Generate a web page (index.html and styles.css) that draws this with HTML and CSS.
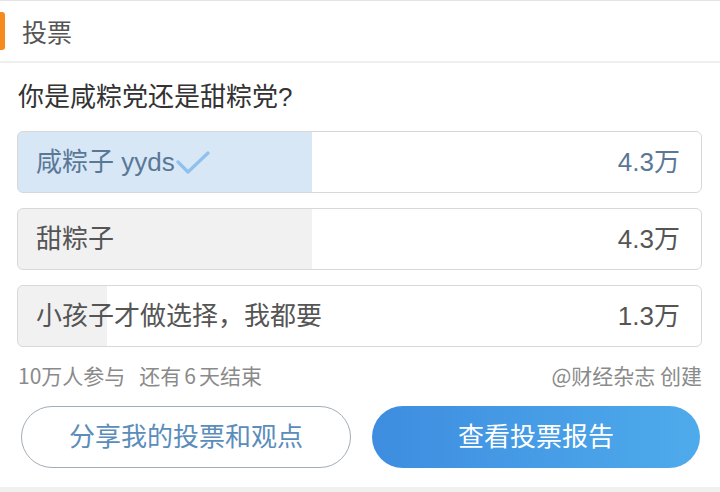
FILE: index.html
```html
<!DOCTYPE html>
<html lang="zh-CN">
<head>
<meta charset="utf-8">
<title>投票</title>
<link rel="stylesheet" href="styles.css">
</head>
<body>
<div class="page">
  <div class="top-line"></div>
  <header class="head">
    <span class="head-bar"></span>
    <span class="head-title">投票</span>
  </header>
  <div class="sep"></div>
  <main class="body">
    <h1 class="question">你是咸粽党还是甜粽党?</h1>
    <ul class="options">
      <li class="option option-chosen" style="--pct: 43%">
        <span class="opt-label">咸粽子 yyds<svg class="check" viewBox="0 0 34 24" width="34" height="24" aria-hidden="true"><path d="M2 11 L12 21 L32 2" fill="none" stroke="#8fc1ec" stroke-width="3.2" stroke-linecap="round" stroke-linejoin="round"/></svg></span>
        <span class="opt-count">4.3万</span>
      </li>
      <li class="option" style="--pct: 43%">
        <span class="opt-label">甜粽子</span>
        <span class="opt-count">4.3万</span>
      </li>
      <li class="option" style="--pct: 13%">
        <span class="opt-label">小孩子才做选择，我都要</span>
        <span class="opt-count">1.3万</span>
      </li>
    </ul>
    <div class="meta">
      <span class="meta-left"><span>10万人参与</span><span>还有<span class="num">6</span>天结束</span></span>
      <span class="meta-right">@财经杂志 创建</span>
    </div>
  </main>
  <div class="actions">
    <button class="btn btn-outline">分享我的投票和观点</button>
    <button class="btn btn-solid">查看投票报告</button>
  </div>
  <div class="bottom-strip"></div>
</div>
</body>
</html>
```
FILE: styles.css
```css
* { box-sizing: border-box; }
html, body { margin: 0; padding: 0; background: #fff; }
body {
  font-family: "Liberation Sans", "Noto Sans CJK SC", sans-serif;
  color: #333;
}
.page { width: 720px; height: 492px; overflow: hidden; display: flex; flex-direction: column; }
.top-line { height: 1px; background: #e4e4e4; flex: none; }
.head {
  height: 60px;
  display: flex;
  align-items: center;
  flex: none;
}
.head-bar {
  width: 5px;
  height: 38px;
  background: #f68a1e;
  border-radius: 0 3px 3px 0;
  margin-right: 17px;
}
.head-title {
  font-size: 25px;
  line-height: 30px;
  color: #555;
  padding-top: 4px;
}
.sep { height: 2px; background: #efefef; flex: none; }
.body { padding: 0 18px 0 17px; }
.question {
  margin: 17px 0 17px 1px;
  font-size: 26px;
  font-weight: normal;
  line-height: 34px;
  color: #333;
}
.options {
  list-style: none;
  margin: 0;
  padding: 0;
  display: flex;
  flex-direction: column;
  gap: 15px;
}
.option {
  height: 62px;
  border: 1px solid #d8d8d8;
  border-radius: 6px;
  display: flex;
  align-items: center;
  justify-content: space-between;
  padding: 0 21px 0 18px;
  background: linear-gradient(to right, #f1f1f1 var(--pct), #fff var(--pct));
  font-size: 26px;
  line-height: 34px;
  color: #555;
}
.option-chosen {
  background: linear-gradient(to right, #d7e7f6 var(--pct), #fff var(--pct));
  color: #5a7896;
}
.opt-label { display: flex; align-items: center; }
.check { margin-left: 1px; margin-top: 2px; }
.meta {
  margin-top: 14px;
  display: flex;
  justify-content: space-between;
  font-family: "Noto Sans CJK SC", sans-serif;
  font-size: 21px;
  line-height: 28px;
  color: #8a8a8a;
  padding-left: 1px;
}
.meta-left { display: flex; gap: 14px; }
.num { margin: 0 3px; }
.actions {
  margin-top: 17px;
  padding: 0 20px 0 21px;
  display: flex;
  gap: 21px;
  flex: none;
}
.btn {
  flex: 1;
  height: 62px;
  border-radius: 31px;
  font-family: "Liberation Sans", "Noto Sans CJK SC", sans-serif;
  font-size: 26px;
  line-height: 34px;
  padding: 0;
}
.btn-outline {
  background: #fff;
  border: 1px solid #a3adb6;
  color: #5b8dbb;
}
.btn-solid {
  border: none;
  color: #fff;
  background: linear-gradient(to right, #3e8de0, #4eabeb);
}
.bottom-strip {
  margin-top: auto;
  height: 5px;
  background: #f0f0f0;
  flex: none;
}
```
